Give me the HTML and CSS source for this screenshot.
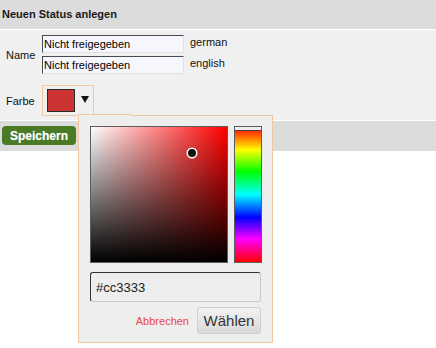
FILE: index.html
```html
<!DOCTYPE html>
<html lang="de">
<head>
    <meta charset="UTF-8">
    <meta name="viewport" content="width=device-width, initial-scale=1.0">
    <title>Neuen Status anlegen</title>
    <link rel="stylesheet" href="styles.css">
</head>
<body>
    <div class="page-header">Neuen Status anlegen</div>

    <form class="status-form">
        <div class="form-row">
            <label class="row-label">Name</label>
            <div class="name-fields">
                <div class="lang-field">
                    <input type="text" value="Nicht freigegeben">
                    <span class="lang">german</span>
                </div>
                <div class="lang-field">
                    <input type="text" value="Nicht freigegeben">
                    <span class="lang">english</span>
                </div>
            </div>
        </div>
        <div class="form-row color-row">
            <label class="row-label">Farbe</label>
            <button type="button" class="color-button">
                <span class="swatch"></span>
                <svg class="arrow" width="8" height="7" viewBox="0 0 8 7"><polygon points="0,0 8,0 4,7" fill="#111"/></svg>
            </button>
        </div>
    </form>

    <div class="actions">
        <button type="button" class="save-button">Speichern</button>
    </div>

    <div class="picker">
        <div class="picker-tab"></div>
        <div class="picker-area">
            <div class="sat-box">
                <div class="sat-dot"></div>
            </div>
            <div class="hue-bar">
                <div class="hue-marker"></div>
            </div>
        </div>
        <input type="text" class="hex-input" value="#cc3333">
        <div class="picker-buttons">
            <a href="#" class="cancel-link">Abbrechen</a>
            <button type="button" class="choose-button">Wählen</button>
        </div>
    </div>
</body>
</html>
```

FILE: styles.css
```css
* {
    margin: 0;
    padding: 0;
    box-sizing: border-box;
}

body {
    font-family: 'Liberation Sans', Arial, sans-serif;
    font-size: 11px;
    color: #111;
    background-color: #fff;
    position: relative;
    min-height: 348px;
}

.page-header {
    height: 30px;
    line-height: 29px;
    padding-left: 2px;
    font-weight: bold;
    background-color: #dcdcdc;
    border-bottom: 1px solid #fff;
    color: #1a1a1a;
}

.status-form {
    background-color: #f0f0f0;
    height: 91px;
    padding-top: 5px;
    border-bottom: 1px solid #fff;
}

.form-row {
    display: flex;
    align-items: center;
}

.row-label {
    width: 42px;
    padding-left: 6px;
}

.name-fields {
    display: flex;
    flex-direction: column;
    gap: 3px;
}

.lang-field {
    display: flex;
    align-items: center;
    gap: 6px;
}

.lang-field input {
    width: 142px;
    height: 18px;
    padding: 0 1px;
    font-family: 'Liberation Sans', Arial, sans-serif;
    font-size: 11px;
    color: #000;
    background-color: #f5f7fc;
    border: 1px solid #dfe1e6;
    border-top-color: #4a4a55;
    border-left-color: #4a4a55;
    outline: none;
}

.lang {
    margin-top: -4px;
}

.color-row {
    margin-top: 11px;
}

.color-button {
    width: 52px;
    height: 31px;
    display: flex;
    align-items: center;
    gap: 6px;
    padding-left: 4px;
    background-color: #f0f0f0;
    border: 1px solid #f0c9a2;
    cursor: pointer;
}

.swatch {
    width: 28px;
    height: 23px;
    background-color: #cc3333;
    border: 1px solid #2a2a2a;
}

.arrow {
    margin-top: -3px;
}

.actions {
    height: 30px;
    background-color: #dcdcdc;
    padding: 5px 0 0 2px;
}

.save-button {
    width: 74px;
    height: 19px;
    background-color: #4a7a23;
    color: #fff;
    font-family: 'Liberation Sans', Arial, sans-serif;
    font-size: 12px;
    font-weight: bold;
    border: none;
    border-radius: 4px;
    text-shadow: 0 0 1px rgba(180, 220, 255, 0.6);
    cursor: pointer;
}

.picker {
    position: absolute;
    top: 115px;
    left: 78px;
    width: 195px;
    height: 228px;
    background-color: #eeeeee;
    border: 1px solid #f2c7a0;
    padding: 10px 10px 0 11px;
}

.picker-tab {
    position: absolute;
    top: -2px;
    left: -1px;
    width: 53px;
    height: 2px;
    border-top: 1px solid #f2c7a0;
    background-color: #eeeeee;
}

.picker-area {
    display: flex;
    gap: 6px;
}

.sat-box {
    position: relative;
    width: 138px;
    height: 137px;
    border: 1px solid #5c5c5c;
    background-color: #ff0000;
    background-image: linear-gradient(to top, #000, rgba(0, 0, 0, 0)),
        linear-gradient(to right, #fff, rgba(255, 255, 255, 0));
}

.sat-dot {
    position: absolute;
    left: 97px;
    top: 22px;
    width: 8px;
    height: 8px;
    border-radius: 50%;
    background-color: #111;
    box-shadow: 0 0 0 1.5px #fff;
}

.hue-bar {
    position: relative;
    width: 28px;
    height: 137px;
    border: 1px solid #5c5c5c;
    background-image: linear-gradient(to bottom, #f00 0%, #ff0 17%, #0f0 33%, #0ff 50%, #00f 67%, #f0f 83%, #f00 100%);
}

.hue-marker {
    position: absolute;
    top: 0;
    left: 0;
    right: 0;
    height: 4px;
    background-color: #f4ecec;
    border-bottom: 1px solid #444;
}

.hex-input {
    display: block;
    width: 171px;
    height: 30px;
    margin-top: 9px;
    padding-left: 5px;
    font-family: 'Liberation Sans', Arial, sans-serif;
    font-size: 13px;
    color: #222;
    background-color: #eeeeee;
    border: 1px solid #c8c8c8;
    border-top-color: #333;
    border-left-color: #333;
    border-radius: 3px;
    outline: none;
}

.picker-buttons {
    display: flex;
    justify-content: flex-end;
    align-items: center;
    gap: 8px;
    width: 171px;
    margin-top: 5px;
}

.cancel-link {
    font-size: 11px;
    color: #e64a45;
    text-decoration: none;
    margin-top: 1px;
}

.choose-button {
    width: 64px;
    height: 27px;
    font-family: 'Liberation Sans', Arial, sans-serif;
    font-size: 15px;
    color: #333;
    background-image: linear-gradient(to bottom, #f2f2f2, #d9d9d9);
    border: 1px solid #cfcfcf;
    border-radius: 3px;
    cursor: pointer;
}
```
